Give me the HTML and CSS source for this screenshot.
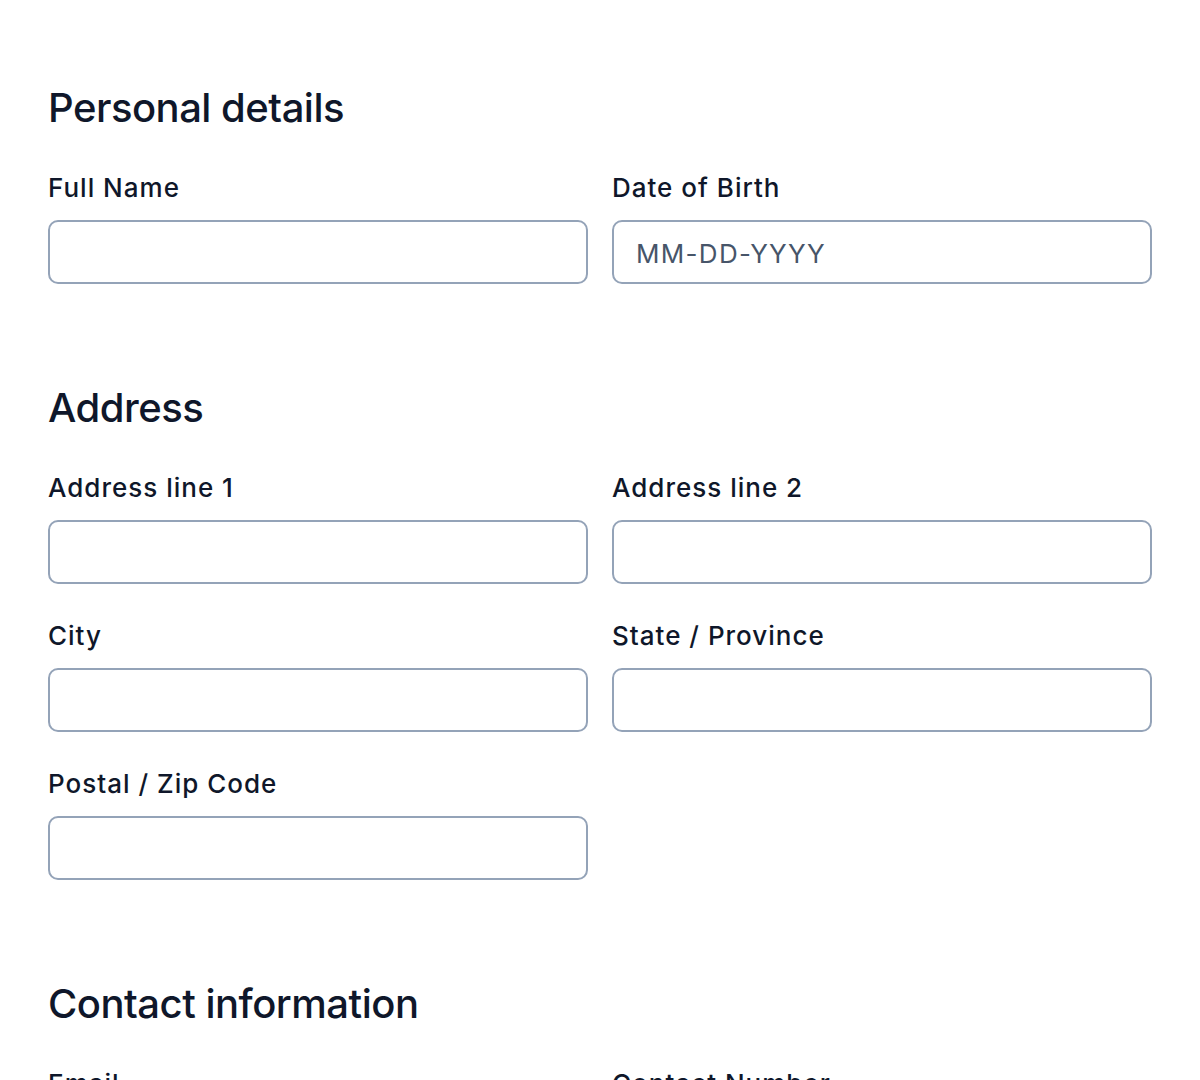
FILE: index.html
```html
<!DOCTYPE html>
<html lang="en">
<head>
<meta charset="utf-8">
<title>Form</title>
<link rel="stylesheet" href="styles.css">
</head>
<body>
<form class="form">
  <section class="section">
    <h2 class="section-title">Personal details</h2>
    <div class="grid">
      <div class="field">
        <label class="label">Full Name</label>
        <input class="input" type="text">
      </div>
      <div class="field">
        <label class="label">Date of Birth</label>
        <input class="input" type="text" placeholder="MM-DD-YYYY">
      </div>
    </div>
  </section>
  <section class="section">
    <h2 class="section-title">Address</h2>
    <div class="grid">
      <div class="field">
        <label class="label">Address line 1</label>
        <input class="input" type="text">
      </div>
      <div class="field">
        <label class="label">Address line 2</label>
        <input class="input" type="text">
      </div>
      <div class="field">
        <label class="label">City</label>
        <input class="input" type="text">
      </div>
      <div class="field">
        <label class="label">State / Province</label>
        <input class="input" type="text">
      </div>
      <div class="field">
        <label class="label">Postal / Zip Code</label>
        <input class="input" type="text">
      </div>
    </div>
  </section>
  <section class="section">
    <h2 class="section-title">Contact information</h2>
    <div class="grid">
      <div class="field">
        <label class="label">Email</label>
        <input class="input" type="text">
      </div>
      <div class="field">
        <label class="label">Contact Number</label>
        <input class="input" type="text">
      </div>
    </div>
  </section>
</form>
</body>
</html>
```

FILE: styles.css
```css
* { box-sizing: border-box; }
html, body { margin: 0; padding: 0; background: #ffffff; }
body {
  font-family: Inter, "Noto Sans", sans-serif;
  color: #0f172a;
}
.form {
  padding: 84px 48px 48px;
  display: flex;
  flex-direction: column;
  gap: 100px;
}
.section-title {
  margin: 0 0 40px;
  font-size: 40px;
  line-height: 48px;
  font-weight: 500;
  letter-spacing: -0.5px;
  color: #0f172a;
}
.grid {
  display: grid;
  grid-template-columns: 1fr 1fr;
  column-gap: 24px;
  row-gap: 36px;
}
.field {
  display: flex;
  flex-direction: column;
  gap: 16px;
}
.label {
  font-size: 26px;
  line-height: 32px;
  font-weight: 500;
  letter-spacing: 1px;
  color: #0f172a;
}
.input {
  height: 64px;
  width: 100%;
  border: 2px solid #94a3b8;
  border-radius: 10px;
  padding: 3px 22px 0;
  font-family: Inter, "Noto Sans", sans-serif;
  font-size: 26px;
  letter-spacing: 1.3px;
  color: #0f172a;
  background: #fff;
  outline: none;
}
.input::placeholder { color: #475569; opacity: 1; }
```
